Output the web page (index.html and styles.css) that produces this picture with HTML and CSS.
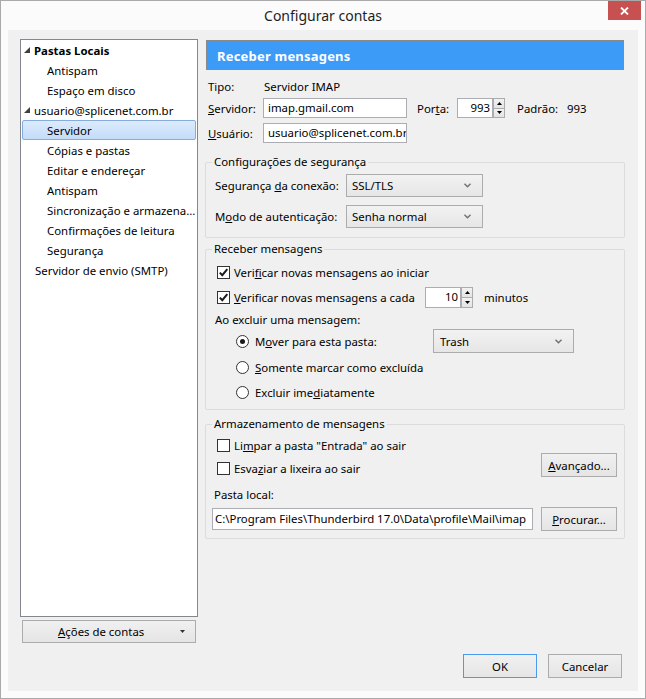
FILE: index.html
```html
<!DOCTYPE html>
<html lang="pt">
<head>
<meta charset="utf-8">
<title>Configurar contas</title>
<link rel="stylesheet" href="styles.css">
</head>
<body>
<div class="window">
  <div class="titlebar">
    <div></div>
    <div class="title">Configurar contas</div>
    <div class="close"><svg width="9" height="8" viewBox="0 0 9 8"><path d="M1 0.5 L8 7.5 M8 0.5 L1 7.5" stroke="#fff" stroke-width="1.8"/></svg></div>
  </div>
  <div class="client">
    <div class="main">
      <div class="leftcol">
        <div class="tree">
          <div class="node top bold"><svg class="twisty" width="6" height="6" viewBox="0 0 6 6"><polygon points="6,0 6,6 0,6" fill="#404040"/></svg>Pastas Locais</div>
          <div class="node child">Antispam</div>
          <div class="node child">Espaço em disco</div>
          <div class="node top"><svg class="twisty" width="6" height="6" viewBox="0 0 6 6"><polygon points="6,0 6,6 0,6" fill="#404040"/></svg>usuario@splicenet.com.br</div>
          <div class="node child selected">Servidor</div>
          <div class="node child">Cópias e pastas</div>
          <div class="node child">Editar e endereçar</div>
          <div class="node child">Antispam</div>
          <div class="node child">Sincronização e armazena...</div>
          <div class="node child">Confirmações de leitura</div>
          <div class="node child">Segurança</div>
          <div class="node plain">Servidor de envio (SMTP)</div>
        </div>
        <div class="btn actions"><span><u>A</u>ções de contas</span><svg class="caret" width="5" height="3" viewBox="0 0 5 3"><polygon points="0,0 5,0 2.5,3" fill="#333"/></svg></div>
      </div>

      <div class="rightcol">
        <div class="header">Receber mensagens</div>

        <div class="frow tipo">
          <span class="flabel">Tipo:</span>
          <span class="fvalue">Servidor IMAP</span>
        </div>
        <div class="frow server">
          <span class="flabel"><u>S</u>ervidor:</span>
          <div class="input w-server">imap.gmail.com</div>
          <span class="porta">Por<u>t</u>a:</span>
          <div class="input num w-port">993</div>
          <div class="spin">
            <div class="spin-btn"><svg width="5" height="3" viewBox="0 0 5 3"><polygon points="0,3 5,3 2.5,0" fill="#000"/></svg></div>
            <div class="spin-btn"><svg width="5" height="3" viewBox="0 0 5 3"><polygon points="0,0 5,0 2.5,3" fill="#000"/></svg></div>
          </div>
          <span class="padrao">Padrão:</span>
          <span>993</span>
        </div>
        <div class="frow user">
          <span class="flabel"><u>U</u>suário:</span>
          <div class="input w-server">usuario@splicenet.com.br</div>
        </div>

        <fieldset class="group g-sec">
          <legend>Configurações de segurança</legend>
          <div class="srow">
            <span class="slabel">Segurança <u>d</u>a conexão:</span>
            <div class="select w-sec"><span>SSL/TLS</span><svg class="chev" width="7" height="5" viewBox="0 0 7 5"><polyline points="0.5,0.8 3.5,3.8 6.5,0.8" fill="none" stroke="#707070" stroke-width="1.4"/></svg></div>
          </div>
          <div class="srow">
            <span class="slabel">M<u>o</u>do de autenticação:</span>
            <div class="select w-sec"><span>Senha normal</span><svg class="chev" width="7" height="5" viewBox="0 0 7 5"><polyline points="0.5,0.8 3.5,3.8 6.5,0.8" fill="none" stroke="#707070" stroke-width="1.4"/></svg></div>
          </div>
        </fieldset>

        <fieldset class="group g-recv">
          <legend>Receber mensagens</legend>
          <div class="crow r1">
            <span class="cb"><svg width="11" height="11" viewBox="0 0 11 11"><polyline points="1.8,5.6 4.3,8.2 9.3,2.2" fill="none" stroke="#1a1a1a" stroke-width="2"/></svg></span>
            <span>Veri<u>f</u>icar novas mensagens ao iniciar</span>
          </div>
          <div class="crow r2">
            <span class="cb"><svg width="11" height="11" viewBox="0 0 11 11"><polyline points="1.8,5.6 4.3,8.2 9.3,2.2" fill="none" stroke="#1a1a1a" stroke-width="2"/></svg></span>
            <span class="every"><u>V</u>erificar novas mensagens a cada</span>
            <div class="input num w-min">10</div>
            <div class="spin small">
              <div class="spin-btn"><svg width="5" height="3" viewBox="0 0 5 3"><polygon points="0,3 5,3 2.5,0" fill="#000"/></svg></div>
              <div class="spin-btn"><svg width="5" height="3" viewBox="0 0 5 3"><polygon points="0,0 5,0 2.5,3" fill="#000"/></svg></div>
            </div>
            <span class="minutos">minutos</span>
          </div>
          <div class="crow r3"><span class="excl">Ao excluir uma mensagem:</span></div>
          <div class="crow r4">
            <span class="rb checked"><span class="dot"></span></span>
            <span class="rtext mover">M<u>o</u>ver para esta pasta:</span>
            <div class="select w-trash"><span>Trash</span><svg class="chev" width="7" height="5" viewBox="0 0 7 5"><polyline points="0.5,0.8 3.5,3.8 6.5,0.8" fill="none" stroke="#707070" stroke-width="1.4"/></svg></div>
          </div>
          <div class="crow r5">
            <span class="rb"></span>
            <span class="rtext"><u>S</u>omente marcar como excluída</span>
          </div>
          <div class="crow r6">
            <span class="rb"></span>
            <span class="rtext">Excluir ime<u>d</u>iatamente</span>
          </div>
        </fieldset>

        <fieldset class="group g-store">
          <legend>Armazenamento de mensagens</legend>
          <div class="store-top">
            <div class="store-checks">
              <div class="crow s1">
                <span class="cb"></span>
                <span>Li<u>m</u>par a pasta "Entrada" ao sair</span>
              </div>
              <div class="crow s2">
                <span class="cb"></span>
                <span>Esva<u>z</u>iar a lixeira ao sair</span>
              </div>
            </div>
            <div class="btn side-btn adv"><span><u>A</u>vançado...</span></div>
          </div>
          <div class="local-label">Pasta local:</div>
          <div class="path-row">
            <div class="input path">C:\Program Files\Thunderbird 17.0\Data\profile\Mail\imap</div>
            <div class="btn side-btn"><span><u>P</u>rocurar...</span></div>
          </div>
        </fieldset>
      </div>
    </div>

    <div class="footer">
      <div class="btn dlg default"><span>OK</span></div>
      <div class="btn dlg"><span>Cancelar</span></div>
    </div>
  </div>
</div>
</body>
</html>
```

FILE: styles.css
```css
* { box-sizing: border-box; }
html, body { margin: 0; padding: 0; }
body {
  width: 646px;
  height: 699px;
  overflow: hidden;
  background: #fff;
  font-family: "Noto Sans", "Open Sans", "DejaVu Sans", sans-serif;
  font-size: 11.4px;
  color: #000;
}
u { text-decoration: underline; text-underline-offset: 1px; }

.window {
  width: 646px;
  height: 699px;
  border: 1px solid #a9a9a9;
  background: #fbfbfb;
  display: flex;
  flex-direction: column;
}

.titlebar {
  height: 29px;
  display: grid;
  grid-template-columns: 1fr auto 1fr;
}
.title {
  font-size: 14px;
  line-height: 30px;
  color: #1e1e1e;
}
.close {
  justify-self: end;
  align-self: start;
  width: 33px;
  height: 19px;
  margin-right: 4px;
  background: #c75050;
  display: flex;
  align-items: center;
  justify-content: center;
}

.client {
  margin: 0 7px;
  height: 661px;
  background: #f0f0f0;
  padding: 9px 0 0 12px;
  display: flex;
  flex-direction: column;
}

.main {
  display: flex;
  gap: 7px;
}

/* left tree */
.leftcol {
  width: 178px;
  display: flex;
  flex-direction: column;
}
.tree {
  height: 578px;
  background: #fff;
  border: 1px solid #828790;
}
.node {
  height: 20px;
  margin: 0 1px;
  border: 1px solid transparent;
  display: flex;
  align-items: center;
  white-space: nowrap;
}
.node.top { padding-left: 1px; }
.node.child { padding-left: 24px; }
.node.plain { padding-left: 12px; }
.node.bold { font-weight: bold; }
.twisty { margin-right: 4px; flex: none; }
.node.selected {
  border-color: #84acdd;
  border-radius: 2px;
  background: linear-gradient(#dcebfc, #c4dcf8);
}

.btn {
  border: 1px solid #acacac;
  background: linear-gradient(#f0f0f0, #e5e5e5);
  display: flex;
  align-items: center;
  justify-content: center;
  white-space: nowrap;
}
.actions {
  margin: 3px 0 0 2px;
  width: 174px;
  height: 23px;
  justify-content: flex-start;
  padding-left: 35px;
}
.actions .caret { margin-left: auto; margin-right: 10px; }

/* right side */
.rightcol {
  width: 420px;
  display: flex;
  flex-direction: column;
}
.header {
  margin: 1px 1px 0 1px;
  height: 30px;
  background: #3d9bf8;
  border-top: 1px solid #8a8a8a;
  border-left: 1px solid #8a8a8a;
  color: #fff;
  font-weight: bold;
  font-size: 13px;
  letter-spacing: 0.2px;
  padding-left: 10px;
  display: flex;
  align-items: center;
}

.frow {
  display: flex;
  align-items: center;
  padding-left: 3px;
  white-space: nowrap;
}
.frow.tipo { margin-top: 6px; height: 20px; }
.frow.server { margin-top: 2px; height: 20px; }
.frow.user { margin-top: 5px; height: 20px; }
.flabel { width: 55px; flex: none; }
.fvalue { margin-left: 1px; }

.input {
  background: #fff;
  border: 1px solid #abadb3;
  height: 20px;
  line-height: 18px;
  padding: 0 4px;
  white-space: nowrap;
  overflow: hidden;
  flex: none;
}
.input.num { text-align: right; padding: 0 2px 0 2px; }
.w-server { width: 144px; }
.porta { margin-left: 10px; width: 40px; flex: none; }
.w-port { width: 36px; }
.padrao { margin-left: 12px; width: 50px; flex: none; }

.spin {
  width: 12px;
  height: 20px;
  display: flex;
  flex-direction: column;
  flex: none;
}
.spin-btn {
  flex: 1;
  border: 1px solid #acacac;
  background: linear-gradient(#f2f2f2, #e4e4e4);
  display: flex;
  align-items: center;
  justify-content: center;
}
.spin-btn + .spin-btn { border-top: none; }
.spin.small { height: 21px; }

/* groups */
.group {
  margin: 0;
  border: 1px solid #dcdcdc;
  border-radius: 2px;
  padding: 0 7px 0 6px;
  min-width: 0;
}
.group legend {
  padding: 0 2px;
  line-height: 16px;
  height: 16px;
  margin-left: 0;
}
.g-sec { margin-top: 11px; padding-top: 4px; padding-bottom: 9px; }
.g-recv { margin-top: 3px; padding-top: 3px; padding-bottom: 5px; }
.g-store { margin-top: 6px; padding-top: 2px; padding-bottom: 7px; }

.srow {
  display: flex;
  align-items: center;
  height: 23px;
  margin-left: 3px;
}
.srow + .srow { margin-top: 8px; }
.slabel { width: 131px; flex: none; white-space: nowrap; }

.select {
  border: 1px solid #acacac;
  background: linear-gradient(#f2f2f2, #e6e6e6);
  height: 23px;
  display: flex;
  align-items: center;
  padding-left: 5px;
  flex: none;
}
.select .chev { margin-left: auto; margin-right: 11px; }
.w-sec { width: 137px; }
.w-trash { width: 141px; height: 24px; padding-left: 6px; }

.crow {
  display: flex;
  align-items: center;
  white-space: nowrap;
}
.g-recv .crow { margin-left: 5px; }
.r1 { height: 24px; }
.r2 { height: 24px; margin-top: 1px; }
.g-recv .r3 { height: 20px; margin-left: 3px; }
.r4 { height: 24px; }
.r5 { height: 24px; margin-top: 2px; }
.r6 { height: 24px; margin-top: 1px; }

.cb {
  width: 13px;
  height: 13px;
  border: 1px solid #333;
  background: #fff;
  margin-right: 4px;
  flex: none;
  display: flex;
  align-items: center;
  justify-content: center;
}
.every { width: 191px; flex: none; }
.w-min { width: 36px; height: 21px; }
.minutos { margin-left: 11px; }

.g-recv .r4, .g-recv .r5, .g-recv .r6 { margin-left: 24px; }
.rb {
  width: 13px;
  height: 13px;
  border: 1px solid #333;
  border-radius: 50%;
  background: #fff;
  flex: none;
  display: flex;
  align-items: center;
  justify-content: center;
}
.rb .dot {
  width: 5px;
  height: 5px;
  border-radius: 50%;
  background: #1a1a1a;
}
.rtext { margin-left: 6px; }
.rtext.mover { width: 178px; flex: none; }

.store-top { display: flex; }
.store-checks { display: flex; flex-direction: column; }
.g-store .crow { margin-left: 5px; }
.s1 { height: 22px; }
.s2 { height: 24px; }
.side-btn { width: 76px; height: 24px; margin-left: auto; flex: none; }
.adv { align-self: flex-end; margin-bottom: 3px; }
.local-label { margin-top: 5px; height: 20px; line-height: 20px; margin-left: 2px; }
.path-row { margin-top: 2px; height: 24px; display: flex; align-items: center; }
.input.path { width: 321px; height: 22px; line-height: 20px; padding-left: 2px; }

.footer {
  margin-top: 11px;
  display: flex;
  justify-content: flex-end;
  gap: 11px;
  padding-right: 16px;
}
.dlg { width: 74px; height: 24px; }
.dlg.default { border-color: #4a9af0; }
```
